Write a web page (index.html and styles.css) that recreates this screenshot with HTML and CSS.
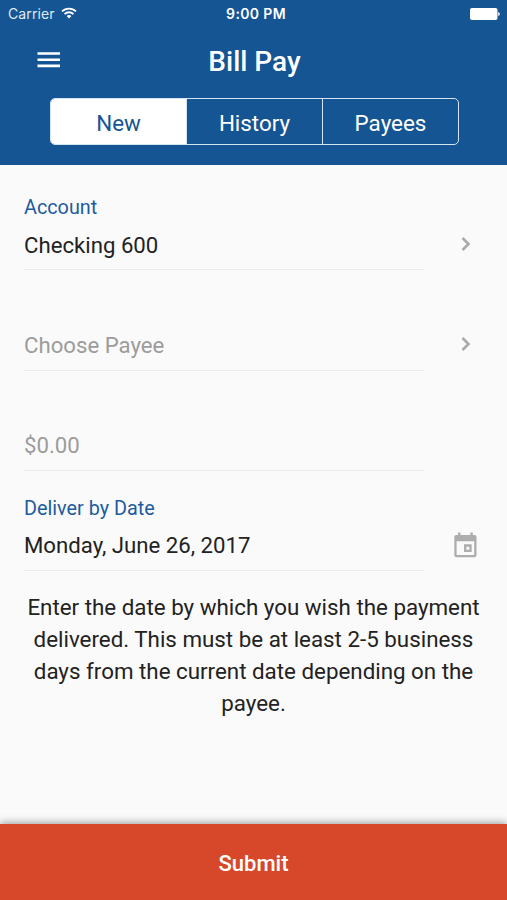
FILE: index.html
```html
<!DOCTYPE html>
<html lang="en">
<head>
<meta charset="utf-8">
<title>Bill Pay</title>
<link rel="stylesheet" href="styles.css">
</head>
<body>
<div class="app">
  <header class="header">
    <div class="status">
      <div class="carrier"><span>Carrier</span>
        <svg class="wifi" width="16" height="12" viewBox="0 0 16 12"><g fill="none" stroke="#fff" stroke-width="1.8"><path d="M1 4.400a10 10 0 0 1 14 0"/><path d="M3.500 7.100a6.400 6.400 0 0 1 9 0"/></g><path fill="#fff" d="M8 11.500L5.600 9.100a3.500 3.500 0 0 1 4.800 0z"/></svg>
      </div>
      <div class="clock">9:00 PM</div>
      <svg class="battery" width="30" height="12" viewBox="0 0 30 12"><rect width="27.500" height="12" rx="2" fill="#fff"/><path d="M28.200 4q1.600.5 1.600 2t-1.600 2z" fill="#fff"/></svg>
    </div>
    <div class="bar">
      <svg class="menu" width="24" height="16" viewBox="0 0 24 16"><path d="M.5 1.500H23M.5 7.700H23M.5 13.900H23" stroke="#fff" stroke-width="2.600"/></svg>
      <h1 class="title">Bill Pay</h1>
    </div>
    <nav class="tabs"><a class="tab active">New</a><a class="tab">History</a><a class="tab">Payees</a></nav>
  </header>
  <main class="form">
    <div class="row">
      <div class="field"><label class="label">Account</label><div class="value">Checking 600</div></div>
      <svg class="chevron" width="10" height="16" viewBox="0 0 10 16"><path d="M1.500 2l6 6-6 6" fill="none" stroke="#aaa" stroke-width="2.600"/></svg>
    </div>
    <div class="row">
      <div class="field"><div class="value hint">Choose Payee</div></div>
      <svg class="chevron" width="10" height="16" viewBox="0 0 10 16"><path d="M1.500 2l6 6-6 6" fill="none" stroke="#aaa" stroke-width="2.600"/></svg>
    </div>
    <div class="row">
      <div class="field"><div class="value hint">$0.00</div></div>
    </div>
    <div class="row">
      <div class="field"><label class="label">Deliver by Date</label><div class="value date">Monday, June 26, 2017</div></div>
      <svg class="calendar" width="23" height="26" viewBox="0 0 23 26"><path fill="#adadad" fill-rule="evenodd" d="M4 .5h2.500V3h9.800V.5h2.500V3h1.700q2 0 2 2v18.300q0 2-2 2H2.300q-2 0-2-2V5q0-2 2-2H4zM2.600 9.200V23h17.600V9.200z"/><path d="M11.200 13.500h5.300v5.300h-5.300z" fill="none" stroke="#adadad" stroke-width="2.300"/></svg>
    </div>
    <p class="note">Enter the date by which you wish the payment<br>delivered. This must be at least 2-5 business<br>days from the current date depending on the<br>payee.</p>
  </main>
  <button class="submit">Submit</button>
</div>
</body>
</html>
```
FILE: styles.css
```css
* { box-sizing: border-box; }
body { margin: 0; font-family: Roboto, "Liberation Sans", sans-serif; }
.app { width: 507px; height: 900px; display: flex; flex-direction: column; background: #fafafa; color: #222; overflow: hidden; }
.header { height: 164.5px; flex: none; background: #155594; color: #fff; }
.status { height: 27px; display: grid; grid-template-columns: 1fr auto 1fr; align-items: center; padding: 0 7px 0 8px; font: 14px Inter, Roboto, sans-serif; }
.carrier { display: flex; align-items: center; gap: 6px; color: #dfeaf5; letter-spacing: .1px; }
.wifi { margin-top: -2px; }
.clock { margin: 0 -2px 0 2px; font-size: 14px; font-weight: 600; letter-spacing: .35px; }
.battery { justify-self: end; }
.bar { height: 71px; display: grid; grid-template-columns: 60px 1fr 60px; align-items: center; padding: 0 0 2px; }
.menu { margin: -4px 0 0 37px; }
.title { margin: 0 0 0 2px; text-align: center; font-size: 28px; font-weight: 500; }
.tabs { width: 409px; height: 47px; margin-left: 50px; display: flex; border: 1.5px solid #d5e4f2; border-radius: 5px; overflow: hidden; }
.tab { flex: 1; display: flex; align-items: center; justify-content: center; padding-top: 2px; font-size: 22.4px; border-left: 1px solid #d5e4f2; }
.tab.active { background: #fff; color: #155594; border-left: 0; }
.form { flex: 1; padding: 5.5px 24px 0; }
.row { height: 100.25px; display: flex; align-items: flex-end; }
.field { width: 400px; border-bottom: 1px solid #ececec; }
.label { display: block; height: 25px; line-height: 27.500px; font-size: 19.8px; color: #1d5c9e; }
.value { height: 50px; line-height: 52px; font-size: 22.2px; }
.date { line-height: 51px; letter-spacing: -.01px; }
.hint { line-height: 51px; color: #9c9c9c; }
.chevron { margin: 0 0 18.500px 36.5px; }
.calendar { margin: 0 0 13px 30px; }
.note { margin: 19.5px 0 0; text-align: center; font-size: 22.35px; line-height: 32px; white-space: nowrap; }
.submit { height: 76px; flex: none; padding: 2px 0 0; border: 0; background: #d64829; color: #fff; font: 500 22px Roboto, sans-serif; box-shadow: 0 -1px 8px #0006; }
```
